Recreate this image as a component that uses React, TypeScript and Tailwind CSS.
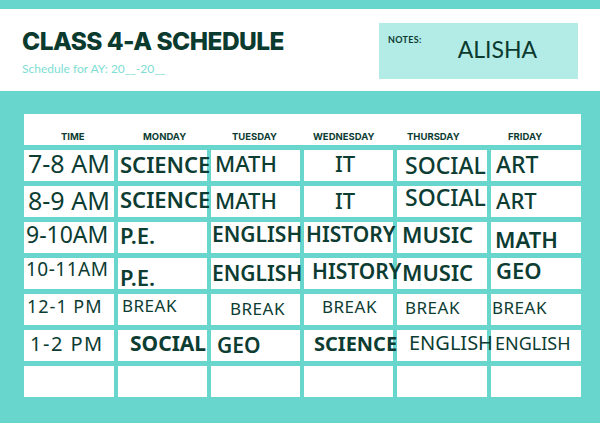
type Cell = { t: string; c: string };

const head: Cell[] = [
  { t: "TIME", c: "pl-[37px]" },
  { t: "MONDAY", c: "pl-[25px]" },
  { t: "TUESDAY", c: "pl-[21px]" },
  { t: "WEDNESDAY", c: "pl-[9px]" },
  { t: "THURSDAY", c: "pl-[10px]" },
  { t: "FRIDAY", c: "pl-[17px]" },
];

const rows: Cell[][] = [
  [
    { t: "7-8 AM", c: "text-[25px] pl-[4px] pt-[1px]" },
    { t: "SCIENCE", c: "text-[22px] font-semibold pl-[2px] pt-[3px]" },
    { t: "MATH", c: "text-[22px] font-medium pl-[4px] pt-[2px]" },
    { t: "IT", c: "text-[22px] font-medium pl-[31px] pt-[2px]" },
    { t: "SOCIAL", c: "text-[23px] font-medium pl-[8px] pt-[4px]" },
    { t: "ART", c: "text-[23px] font-medium pl-[5px] pt-[3px]" },
  ],
  [
    { t: "8-9 AM", c: "text-[25px] pl-[4px] pt-[2px]" },
    { t: "SCIENCE", c: "text-[22px] font-semibold pl-[2px] pt-[2px]" },
    { t: "MATH", c: "text-[22px] font-medium pl-[4px] pt-[3px]" },
    { t: "IT", c: "text-[22px] font-medium pl-[31px] pt-[3px]" },
    { t: "SOCIAL", c: "text-[23px] font-medium pl-[8px] pt-[0px]" },
    { t: "ART", c: "text-[22px] font-medium pl-[5px] pt-[3px]" },
  ],
  [
    { t: "9-10AM", c: "text-[23px] pl-[2px] pt-[1px]" },
    { t: "P.E.", c: "text-[22px] font-semibold pl-[2px] pt-[2px]" },
    { t: "ENGLISH", c: "text-[21px] font-semibold pl-[1px] pt-[2px]" },
    { t: "HISTORY", c: "text-[21px] font-semibold pl-[2px] pt-[2px]" },
    { t: "MUSIC", c: "text-[22px] font-semibold pl-[5px] pt-[1px]" },
    { t: "MATH", c: "text-[22px] font-semibold pl-[4px] pt-[6px]" },
  ],
  [
    { t: "10-11AM", c: "text-[19px] tracking-[0.5px] pl-[2px] pt-[2px]" },
    { t: "P.E.", c: "text-[22px] font-semibold pl-[2px] pt-[8px]" },
    { t: "ENGLISH", c: "text-[21px] font-semibold pl-[1px] pt-[5px]" },
    { t: "HISTORY", c: "text-[21px] font-semibold pl-[8px] pt-[3px]" },
    { t: "MUSIC", c: "text-[22px] font-semibold pl-[5px] pt-[3px]" },
    { t: "GEO", c: "text-[22px] font-semibold pl-[5px] pt-[1px]" },
  ],
  [
    { t: "12-1 PM", c: "text-[18px] tracking-[1px] pl-[3px] pt-[3px]" },
    { t: "BREAK", c: "text-[17px] tracking-[0.5px] pl-[4px] pt-[3px]" },
    { t: "BREAK", c: "text-[17px] tracking-[0.5px] pl-[19px] pt-[6px]" },
    { t: "BREAK", c: "text-[17px] tracking-[0.5px] pl-[18px] pt-[4px]" },
    { t: "BREAK", c: "text-[17px] tracking-[0.5px] pl-[8px] pt-[5px]" },
    { t: "BREAK", c: "text-[17px] tracking-[0.5px] pl-[1px] pt-[5px]" },
  ],
  [
    { t: "1-2 PM", c: "text-[20px] tracking-[1.5px] pl-[6px] pt-[4px]" },
    { t: "SOCIAL", c: "text-[21px] font-bold pl-[12px] pt-[3px]" },
    { t: "GEO", c: "text-[21px] font-semibold pl-[6px] pt-[5px]" },
    { t: "SCIENCE", c: "text-[20px] font-bold pl-[10px] pt-[4px]" },
    { t: "ENGLISH", c: "text-[20px] pl-[12px] pt-[3px]" },
    { t: "ENGLISH", c: "text-[18px] pl-[4px] pt-[4px]" },
  ],
  [
    { t: "", c: "" },
    { t: "", c: "" },
    { t: "", c: "" },
    { t: "", c: "" },
    { t: "", c: "" },
    { t: "", c: "" },
  ],
];

const cols = "grid grid-cols-[90px_89px_89px_89px_90px_90px] gap-x-[4px]";

export default function App() {
  return (
    <div className="w-[600px] h-[423px] bg-[#68d6cc] overflow-hidden font-['Noto_Sans',sans-serif] text-[#0c3c32]">
      <div className="h-[9px]" />
      <header className="h-[82px] bg-white flex justify-between pl-[22px] pr-[22px]">
        <div className="flex flex-col pt-[20px]">
          <h1 className="font-['Inter',sans-serif] font-extrabold text-[24.5px] tracking-[-0.55px] leading-none text-[#0b3a2f]">
            CLASS 4-A SCHEDULE
          </h1>
          <p className="mt-[9px] font-['Lato',sans-serif] text-[12px] leading-none text-[#80ddd3]">
            Schedule for AY: 20__-20__
          </p>
        </div>
        <div className="mt-[14px] w-[199px] h-[56px] bg-[#b3ebe6] flex items-start pl-[9px]">
          <span className="mt-[12px] font-['Lato',sans-serif] font-bold text-[9px] tracking-[0.3px] leading-none">
            NOTES:
          </span>
          <span className="mt-[15px] ml-[36px] font-['Lato',sans-serif] text-[23px] leading-none text-[#0b3a2f]">
            ALISHA
          </span>
        </div>
      </header>

      <main className="pt-[23px] pl-[24px] flex flex-col gap-y-[5px]">
        <div className={`${cols} w-[557px] h-[31px] bg-white`}>
          {head.map((h) => (
            <div
              key={h.t}
              className={`pt-[18px] font-['Inter',sans-serif] font-bold text-[9.5px] leading-none ${h.c}`}
            >
              {h.t}
            </div>
          ))}
        </div>
        {rows.map((r, i) => (
          <div key={i} className={`${cols} h-[31px]`}>
            {r.map((cell, j) => (
              <div key={j} className="bg-white h-[31px]">
                <div className={`relative z-10 leading-none whitespace-nowrap ${cell.c}`}>
                  {cell.t}
                </div>
              </div>
            ))}
          </div>
        ))}
      </main>
    </div>
  );
}
